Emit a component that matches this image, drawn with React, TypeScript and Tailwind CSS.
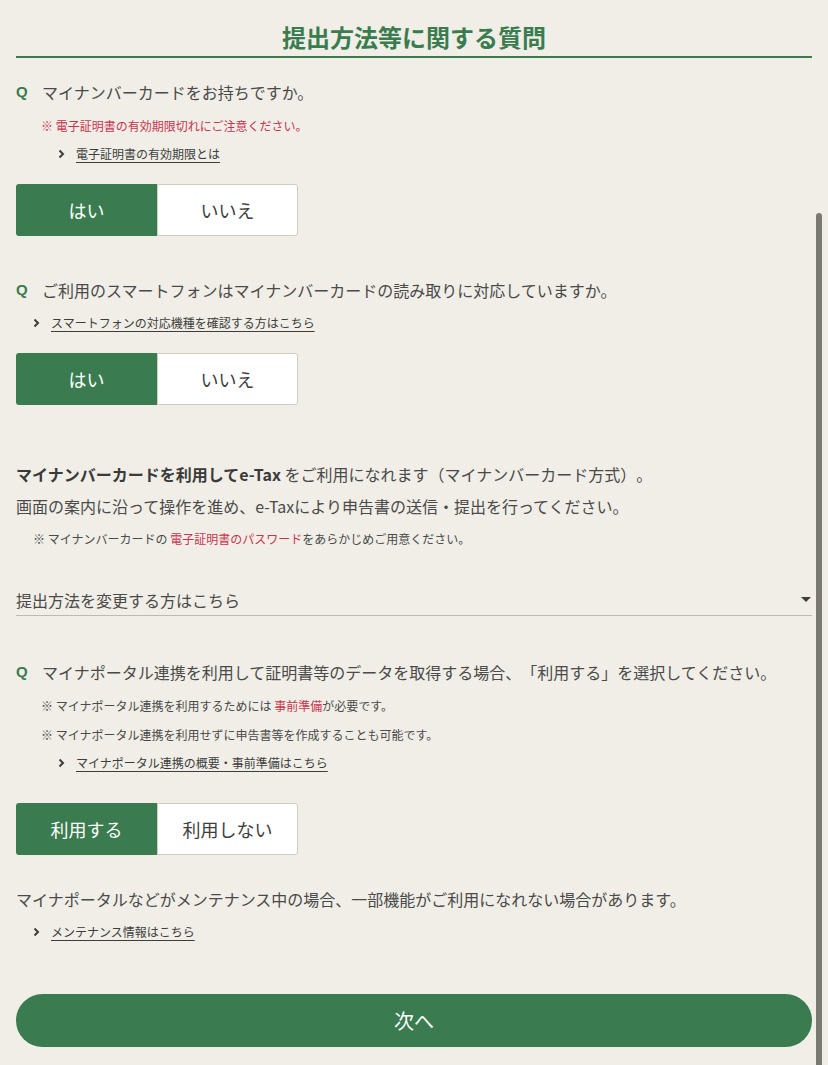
import React from 'react';

const GREEN = 'bg-[#3a7c4f]';

const Chevron = () => (
  <svg width="7" height="10" viewBox="0 0 7 10" className="shrink-0">
    <polyline points="1.5,1.5 5,5 1.5,8.5" fill="none" stroke="#3d3d3d" strokeWidth="2" />
  </svg>
);

const LinkRow = ({ text, indent }: { text: string; indent: string }) => (
  <div className={`flex items-center h-5 ${indent}`}>
    <Chevron />
    <a className="ml-[11px] text-[12px] leading-5 text-[#3d3d3d] underline underline-offset-[3px]">{text}</a>
  </div>
);

const Question = ({ children }: { children: React.ReactNode }) => (
  <div className="flex items-center h-6">
    <span className="w-[26px] text-[15px] font-bold text-[#3a7c4f] font-['Liberation_Sans',sans-serif]">Q</span>
    <span className="text-[16px] leading-6 text-[#4a4a4a]">{children}</span>
  </div>
);

const Note = ({ children, red }: { children: React.ReactNode; red?: boolean }) => (
  <p className={`pl-[25px] text-[12px] leading-5 ${red ? 'text-[#c8344f]' : 'text-[#4a4a4a]'}`}>{children}</p>
);

const Choice = ({ yes, no }: { yes: string; no: string }) => (
  <div className="flex h-[52px]">
    <button className={`w-[141px] ${GREEN} text-white text-[18px] rounded-l-[3px]`}>{yes}</button>
    <button className="w-[141px] bg-white text-[#3d3d3d] text-[18px] border border-[#d2ccc0] rounded-r-[3px]">{no}</button>
  </div>
);

export default function App() {
  return (
    <div
      className="min-h-screen bg-[#f0eee6] px-4 pt-[21px] pb-8 [text-spacing-trim:space-all]"
      style={{ fontFamily: '"Noto Sans CJK JP", "Noto Sans", sans-serif' }}
    >
      <h2 className="text-center text-[24px] leading-8 font-bold text-[#3a7c4f] pb-[3px] border-b-2 border-[#3a7c4f]">
        提出方法等に関する質問
      </h2>

      <div className="mt-[22px]">
        <Question>マイナンバーカードをお持ちですか。</Question>
        <div className="mt-3">
          <Note red>※ 電子証明書の有効期限切れにご注意ください。</Note>
        </div>
        <div className="mt-2">
          <LinkRow text="電子証明書の有効期限とは" indent="pl-[42px]" />
        </div>
        <div className="mt-5">
          <Choice yes="はい" no="いいえ" />
        </div>
      </div>

      <div className="mt-[42px]">
        <Question>ご利用のスマートフォンはマイナンバーカードの読み取りに対応していますか。</Question>
        <div className="mt-[11px]">
          <LinkRow text="スマートフォンの対応機種を確認する方はこちら" indent="pl-[17px]" />
        </div>
        <div className="mt-5">
          <Choice yes="はい" no="いいえ" />
        </div>
      </div>

      <div className="mt-[53px] text-[16px] leading-8 text-[#4a4a4a]">
        <p>
          <span className="font-bold text-[#3a3a3a]">マイナンバーカードを利用してe-Tax</span> をご利用になれます（マイナンバーカード方式）。
        </p>
        <p>画面の案内に沿って操作を進め、e-Taxにより申告書の送信・提出を行ってください。</p>
      </div>
      <p className="mt-[7px] pl-[17px] text-[12px] leading-5 text-[#4a4a4a]">
        ※ マイナンバーカードの <span className="text-[#c8344f]">電子証明書のパスワード</span>をあらかじめご用意ください。
      </p>

      <div className="mt-[39px] flex items-center justify-between pb-[3px] border-b border-[#bdbab2]">
        <span className="text-[16px] leading-6 text-[#4a4a4a]">提出方法を変更する方はこちら</span>
        <svg width="10" height="6" viewBox="0 0 10 6" className="mr-[1px]">
          <polygon points="0,0 10,0 5,5" fill="#3d3d3d" />
        </svg>
      </div>

      <div className="mt-11">
        <Question>マイナポータル連携を利用して証明書等のデータを取得する場合、「利用する」を選択してください。</Question>
        <div className="mt-3">
          <Note>
            ※ マイナポータル連携を利用するためには <span className="text-[#c8344f]">事前準備</span>が必要です。
          </Note>
        </div>
        <div className="mt-[9px]">
          <Note>※ マイナポータル連携を利用せずに申告書等を作成することも可能です。</Note>
        </div>
        <div className="mt-2">
          <LinkRow text="マイナポータル連携の概要・事前準備はこちら" indent="pl-[42px]" />
        </div>
        <div className="mt-[30px]">
          <Choice yes="利用する" no="利用しない" />
        </div>
      </div>

      <p className="mt-8 text-[16px] leading-6 text-[#4a4a4a]">
        マイナポータルなどがメンテナンス中の場合、一部機能がご利用になれない場合があります。
      </p>
      <div className="mt-[11px]">
        <LinkRow text="メンテナンス情報はこちら" indent="pl-[17px]" />
      </div>

      <button className={`mt-[52px] w-full h-[53px] rounded-full ${GREEN} text-white text-[20px]`}>次へ</button>

      <div className="fixed right-[6px] top-[213px] bottom-0 w-[6px] rounded-t-full bg-[#7b7a72]" />
    </div>
  );
}
